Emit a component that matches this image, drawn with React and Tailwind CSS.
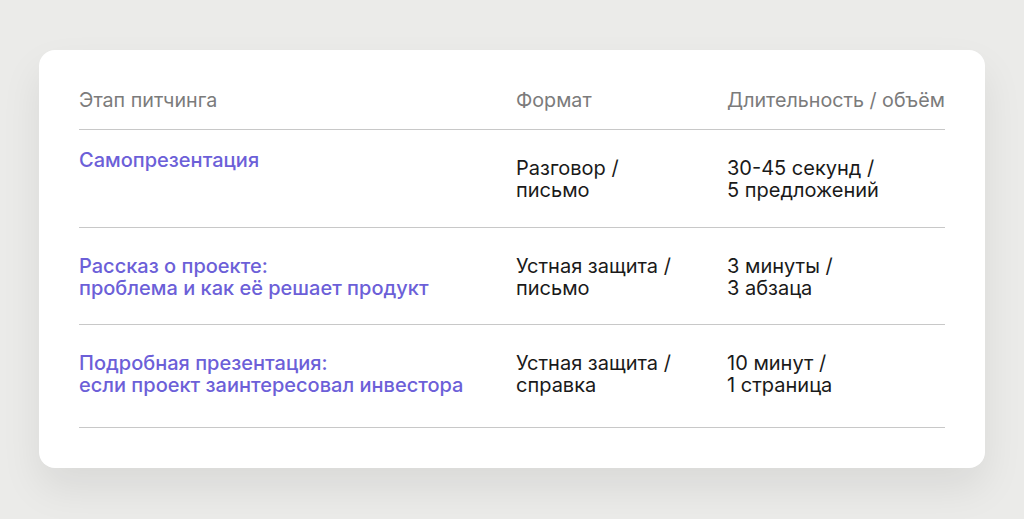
const rows = [
  {
    stage: ['Самопрезентация'],
    format: ['Разговор /', 'письмо'],
    size: ['30-45 секунд /', '5 предложений'],
    lift: true,
  },
  {
    stage: ['Рассказ о проекте:', 'проблема и как её решает продукт'],
    format: ['Устная защита /', 'письмо'],
    size: ['3 минуты /', '3 абзаца'],
  },
  {
    stage: ['Подробная презентация:', 'если проект заинтересовал инвестора'],
    format: ['Устная защита /', 'справка'],
    size: ['10 минут /', '1 страница'],
    last: true,
  },
];

function Lines({ items }) {
  return items.map((t, i) => <div key={i}>{t}</div>);
}

export default function App() {
  return (
    <div
      className="min-h-[519px] w-full bg-[#ebebe9] pt-[50px] px-[39px]"
      style={{ fontFamily: 'Inter, "Noto Sans", sans-serif' }}
    >
      <div className="rounded-[16px] bg-white px-[40px] pt-[39px] pb-[40px] shadow-[0_20px_40px_rgba(0,0,0,0.08)]">
        <div className="grid grid-cols-[437px_211px_1fr] border-b border-[#c8c8c8] pb-[18px] text-[19.7px] leading-[22px] text-[#7b7b7b]">
          <div>Этап питчинга</div>
          <div>Формат</div>
          <div className="whitespace-nowrap">Длительность / объём</div>
        </div>
        {rows.map((r, i) => (
          <div
            key={i}
            className={`grid grid-cols-[437px_211px_1fr] border-b border-[#c8c8c8] pt-[27px] text-[20px] leading-[22px] text-[#1a1a1a] ${r.last ? 'pb-[31px]' : i === 0 ? 'pb-[26px]' : 'pb-[25px]'}`}
          >
            <div className={`font-medium text-[#6c5fd8] ${r.lift ? '-mt-[8px]' : ''}`}>
              <Lines items={r.stage} />
            </div>
            <div>
              <Lines items={r.format} />
            </div>
            <div>
              <Lines items={r.size} />
            </div>
          </div>
        ))}
      </div>
    </div>
  );
}
